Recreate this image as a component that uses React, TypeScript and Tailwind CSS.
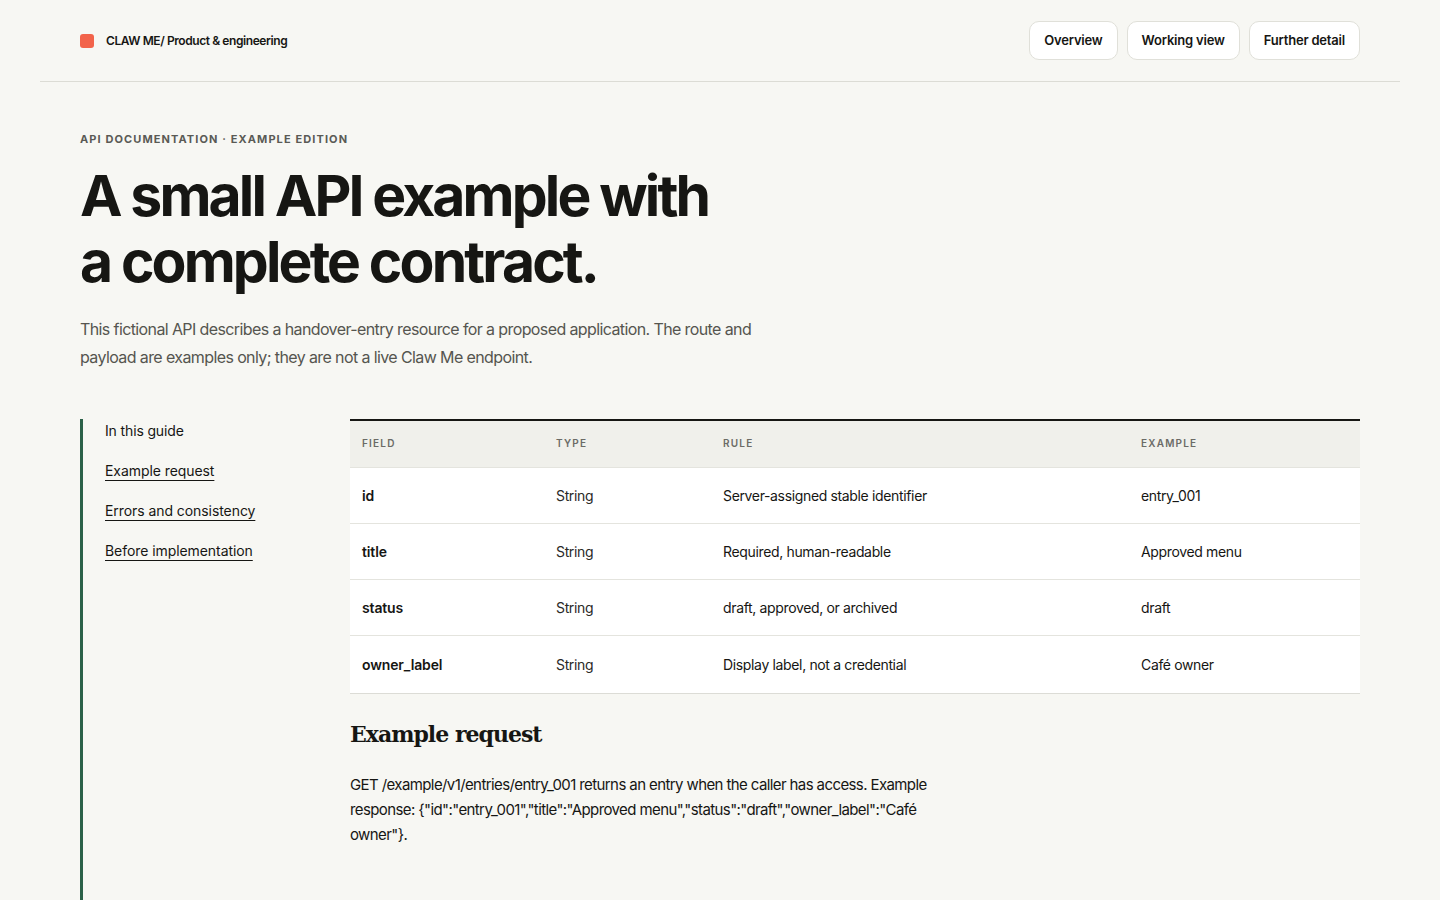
const fields = [
  { name: "id", type: "String", rule: "Server-assigned stable identifier", example: "entry_001" },
  { name: "title", type: "String", rule: "Required, human-readable", example: "Approved menu" },
  { name: "status", type: "String", rule: "draft, approved, or archived", example: "draft" },
  { name: "owner_label", type: "String", rule: "Display label, not a credential", example: "Café owner" },
];

const guideLinks = ["Example request", "Errors and consistency", "Before implementation"];

const navItems = ["Overview", "Working view", "Further detail"];

function TopBar() {
  return (
    <header className="mx-10 flex items-center justify-between border-b border-[#dcdcd5] px-10 pt-[21px] pb-[21px]">
      <div className="flex items-center gap-3">
        <span className="size-[14px] rounded-[3px] bg-[#f2634a]" />
        <span className="text-[12px] font-semibold tracking-[-0.035em] text-[#161613]">
          CLAW ME/ Product &amp; engineering
        </span>
      </div>
      <nav className="flex items-center gap-[9px]">
        {navItems.map((item) => (
          <a
            key={item}
            href="#"
            className="flex h-[39px] items-center rounded-[10px] border border-[#e0e0d9] bg-white px-[14px] text-[13px] font-semibold tracking-[-0.015em] text-[#161613]"
          >
            {item}
          </a>
        ))}
      </nav>
    </header>
  );
}

function FieldTable() {
  return (
    <table className="w-full table-fixed border-collapse border-t-2 border-[#161613] text-[14px] text-[#161613]">
      <colgroup>
        <col className="w-[194px]" />
        <col className="w-[167px]" />
        <col className="w-[418px]" />
        <col />
      </colgroup>
      <thead>
        <tr className="h-[48px] bg-[#f0f0eb] text-left text-[10px] font-semibold uppercase tracking-[0.12em] text-[#6b6b66]">
          <th className="px-3 font-semibold">Field</th>
          <th className="px-3 font-semibold">Type</th>
          <th className="px-3 font-semibold">Rule</th>
          <th className="px-3 font-semibold">Example</th>
        </tr>
      </thead>
      <tbody className="bg-white tracking-[-0.025em]">
        {fields.map((f, i) => (
          <tr key={f.name} className={`border-t border-[#e4e4de] ${i === fields.length - 1 ? "h-[58px]" : "h-[56px]"}`}>
            <td className="px-3 font-semibold tracking-[-0.01em]">{f.name}</td>
            <td className="px-3 text-[#2a2a27]">{f.type}</td>
            <td className="px-3">{f.rule}</td>
            <td className="px-3">{f.example}</td>
          </tr>
        ))}
      </tbody>
      <tfoot>
        <tr className="border-t border-[#dcdcd6]">
          <td colSpan={4} />
        </tr>
      </tfoot>
    </table>
  );
}

export default function App() {
  return (
    <div className="min-h-screen bg-[#f7f7f3] font-['Inter',sans-serif] text-[#161613]">
      <TopBar />

      <main className="px-20 pt-[49px]">
        <p className="text-[11px] font-bold uppercase tracking-[0.1em] text-[#5a5a55]">
          API documentation · Example edition
        </p>
        <h1 className="mt-[15px] max-w-[660px] text-[57px] font-bold leading-[66px] tracking-[-0.05em]">
          A small API example with a complete contract.
        </h1>
        <p className="mt-[20px] max-w-[690px] text-[16px] leading-[28px] tracking-[-0.038em] text-[#55554f]">
          This fictional API describes a handover-entry resource for a proposed application. The route
          and payload are examples only; they are not a live Claw Me endpoint.
        </p>

        <div className="mt-[48px] grid grid-cols-[270px_1fr] pb-24">
          <aside className="border-l-[3px] border-[#2b6148] pl-[22px]">
            <p className="text-[14px] leading-[24px] tracking-[-0.01em]">In this guide</p>
            <ul className="mt-[15px] flex flex-col gap-[15px]">
              {guideLinks.map((link) => (
                <li key={link} className="leading-[24px]">
                  <a
                    href="#"
                    className="text-[14px] leading-[24px] tracking-[-0.005em] underline decoration-1 underline-offset-[4px]"
                  >
                    {link}
                  </a>
                </li>
              ))}
            </ul>
          </aside>

          <section>
            <FieldTable />

            <h2 className="mt-[24px] font-['DejaVu_Serif',serif] text-[22px] font-bold tracking-[-0.045em]">
              Example request
            </h2>
            <p className="mt-[21px] max-w-[600px] text-[15px] leading-[25px] tracking-[-0.04em] text-[#161613]">
              GET /example/v1/entries/entry_001 returns an entry when the caller has access. Example
              response: {'{"id":"entry_001","title":"Approved menu","status":"draft","owner_label":"Café owner"}'}.
            </p>

            <h2 className="mt-[50px] font-['DejaVu_Serif',serif] text-[22px] font-bold tracking-[-0.045em]">
              Errors and consistency
            </h2>
            <p className="mt-[18px] max-w-[600px] text-[15px] leading-[25px] tracking-[-0.04em]">
              A missing entry returns 404; a stale write returns 409 with the current version so the
              caller can retry with fresh data.
            </p>
          </section>
        </div>
      </main>
    </div>
  );
}
